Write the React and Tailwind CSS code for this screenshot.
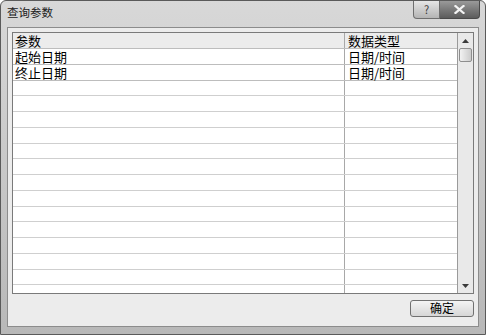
import React from "react";

const font = { fontFamily: '"Noto Sans CJK SC", "Noto Sans", sans-serif' };

const rows = [
  { name: "起始日期", type: "日期/时间" },
  { name: "终止日期", type: "日期/时间" },
];

function TitleButtons() {
  // 도움말 / 닫기 버튼
  return (
    <div className="absolute right-[5px] top-0 flex">
      <div className="w-[27px] h-[18px] border border-[#6e6e6e] border-t-0 rounded-bl-[4px] bg-gradient-to-b from-[#e6e6e6] to-[#b4b4b4] flex items-center justify-center">
        <span className="text-[11px] leading-none text-[#3a3a3a]" style={font}>?</span>
      </div>
      <div className="w-[40px] h-[18px] border border-l-0 border-[#4a4a4a] border-t-0 rounded-br-[4px] bg-gradient-to-b from-[#9a9a9a] to-[#5c5c5c] flex items-center justify-center">
        <svg width="11" height="9" viewBox="0 0 11 9">
          <path d="M1.5 1 L9.5 8 M9.5 1 L1.5 8" stroke="#f4f4f4" strokeWidth="2.2" strokeLinecap="square" />
        </svg>
      </div>
    </div>
  );
}

function Scrollbar() {
  return (
    <div className="w-[16px] border-l border-[#9a9a9a] bg-[#e9e9e9] flex flex-col items-center">
      <div className="h-[15px] flex items-center justify-center">
        <svg width="7" height="4" viewBox="0 0 7 4">
          <path d="M0 4 L3.5 0 L7 4 Z" fill="#3a3a3a" />
        </svg>
      </div>
      <div className="w-[13px] h-[14px] border border-[#8e8e8e] rounded-[2px] bg-gradient-to-r from-[#f2f2f2] to-[#cccccc]" />
      <div className="flex-1" />
      <div className="h-[15px] flex items-center justify-center">
        <svg width="7" height="4" viewBox="0 0 7 4">
          <path d="M0 0 L7 0 L3.5 4 Z" fill="#3a3a3a" />
        </svg>
      </div>
    </div>
  );
}

function ParamGrid() {
  const blank = Array.from({ length: 13 });
  return (
    <div className="h-[262px] border border-[#7a7a7a] flex bg-white">
      <div className="flex-1 flex flex-col text-[13px] leading-[15px] text-black" style={font}>
        <div className="flex h-[16px] border-b border-[#bdbdbd] bg-[#ececec]">
          <div className="w-[332px] border-r border-[#a8a8a8] pl-[2px] flex items-center">参数</div>
          <div className="flex-1 pl-[3px] flex items-center">数据类型</div>
        </div>
        {rows.map((row, index) => (
          <div className="flex h-[15.75px] border-b border-[#bdbdbd]" key={index}>
            <div className="w-[332px] border-r border-[#a8a8a8] pl-[2px] flex items-center">{row.name}</div>
            <div className="flex-1 pl-[3px] flex items-center">{row.type}</div>
          </div>
        ))}
        {blank.map((_, index) => (
          <div className="flex h-[15.75px] shrink-0 border-b border-[#cfcfcf]" key={"b" + index}>
            <div className="w-[332px] border-r border-[#a8a8a8]" />
            <div className="flex-1" />
          </div>
        ))}
        <div className="flex flex-1">
          <div className="w-[332px] border-r border-[#a8a8a8]" />
          <div className="flex-1" />
        </div>
      </div>
      <Scrollbar />
    </div>
  );
}

export default function App() {
  return (
    <div className="w-[486px] h-[335px] overflow-hidden bg-white">
      <div className="relative w-[486px] h-[335px] border border-[#5a5a5a] rounded-t-[6px] bg-gradient-to-b from-[#d8d8d8] via-[#c8c8c8] to-[#b8b8b8] flex flex-col">
        <div className="h-[26px] shrink-0 flex items-start pl-[6px] pt-[4px]">
          <span className="text-[11.5px] leading-[14px] text-[#202020]" style={font}>查询参数</span>
        </div>
        <TitleButtons />
        <div className="mx-[6px] mb-[7px] flex-1 border border-[#8c8c8c] bg-[#ececec] p-[4px] flex flex-col">
          <ParamGrid />
          <div className="flex-1 flex items-center justify-end">
            <button
              className="w-[64px] h-[17px] border border-[#707070] rounded-[3px] bg-gradient-to-b from-[#f4f4f4] to-[#d6d6d6] text-[12px] leading-none text-black flex items-center justify-center"
              style={font}
            >
              确定
            </button>
          </div>
        </div>
      </div>
    </div>
  );
}
